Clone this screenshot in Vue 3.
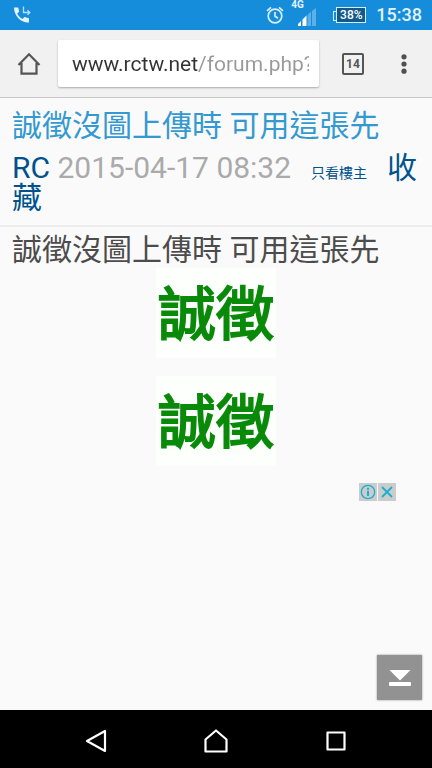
<script setup>
import { ref } from 'vue'

const url = ref('www.rctw.net/forum.php?mod=viewthread')
const tabCount = ref(14)
const post = {
  title: '誠徵沒圖上傳時 可用這張先',
  author: 'RC',
  date: '2015-04-17 08:32',
}
const banners = ['誠徵', '誠徵']
</script>

<template>
  <div class="screen">
    <div class="status">
      <svg class="call" width="18" height="18" viewBox="0 0 18 18" aria-hidden="true">
        <path d="M1 1.5h4.2l1 4.3-2 1.8c1.2 2.6 3 4.3 5.4 5.5l1.8-2 4.6 1.1V16.500C8 17 1 10 1 1.500z" fill="#e3f3ff" />
        <path d="M10.500 0.500V6.500H16.500M14.500 4.300l2.300 2.200-2.300 2.200" fill="none" stroke="#b9dff8" stroke-width="1.300" />
      </svg>
      <div class="status-right">
        <svg width="18" height="20" viewBox="0 0 18 20" fill="none" stroke="#d9eefb" stroke-width="1.700" aria-hidden="true">
          <circle cx="9" cy="11" r="6.800" />
          <path d="M9 7v4.300l3 2M1 5.800L5 2.400M17 5.800L13 2.400" />
        </svg>
        <div class="network">
          <span class="generation">4G</span>
          <svg width="18" height="18" viewBox="0 0 18 18" aria-hidden="true">
            <path d="M0 18v-2l3-3v5z" fill="#fff" />
            <path d="M4.500 18v-6.500l4-4V18z" fill="#fff" />
            <path d="M9.500 18V7l3.500-3.500v14.500z" fill="#5cb0e8" />
            <path d="M14 18V3l4-3v18z" fill="#5cb0e8" />
          </svg>
        </div>
        <span class="battery">38%</span>
        <time class="clock">15:38</time>
      </div>
    </div>

    <header class="toolbar">
      <button class="tool" type="button" aria-label="Home">
        <svg width="24" height="24" viewBox="0 0 24 24" fill="none" stroke="#555" stroke-width="2.200">
          <path d="M1.500 13L12 2.300 22.500 13M4.500 11v10.700h15V11" />
        </svg>
      </button>
      <div class="address">
        <input v-model="url" class="address-input" type="text" aria-label="Address" />
      </div>
      <button class="tool tabs" type="button" aria-label="Open tabs">
        <span class="tab-count">{{ tabCount }}</span>
      </button>
      <button class="tool menu" type="button" aria-label="Menu">
        <svg width="6" height="20" viewBox="0 0 6 20" fill="#505050">
          <circle cx="3" cy="2.800" r="2.600" />
          <circle cx="3" cy="10" r="2.600" />
          <circle cx="3" cy="17.200" r="2.600" />
        </svg>
      </button>
    </header>

    <main class="page">
      <section class="heading">
        <h1 class="title">{{ post.title }}</h1>
        <p class="meta">
          <a href="#author">{{ post.author }}</a>
          {{ ' ' }}<time>{{ post.date }}</time>
          <a class="only" href="#only">只看樓主</a>
          <a href="#favorite">收藏</a>
        </p>
      </section>

      <article class="body">
        <p class="message">{{ post.title }}</p>
        <div class="banners">
          <span v-for="(text, i) in banners" :key="i" class="banner">{{ text }}</span>
        </div>
        <div class="ad">
          <button class="ad-button" type="button" aria-label="Ad information">
            <svg width="18" height="18" viewBox="0 0 18 18" fill="none" stroke="#18afd0">
              <circle cx="9" cy="9" r="6.700" stroke-width="1.300" />
              <path d="M9 7.800v5.200M9 4.800v2" stroke-width="2" />
            </svg>
          </button>
          <button class="ad-button" type="button" aria-label="Close ad">
            <svg width="18" height="18" viewBox="0 0 18 18" fill="none" stroke="#18afd0" stroke-width="1.800">
              <path d="M4 4l10 10M14 4L4 14" />
            </svg>
          </button>
        </div>
      </article>

      <button class="bottom" type="button" aria-label="Scroll to bottom">
        <svg width="22" height="16" viewBox="0 0 22 16" fill="#fff">
          <path d="M0.500 0h21L11 10.500z" />
          <rect x="0" y="12" width="22" height="4" rx="1" />
        </svg>
      </button>
    </main>

    <nav class="system">
      <button class="key" type="button" aria-label="Back">
        <svg width="24" height="24" viewBox="0 0 24 24" fill="none" stroke="#fff" stroke-width="2.200" stroke-linejoin="round">
          <path d="M21 2v20L3 12z" />
        </svg>
      </button>
      <button class="key" type="button" aria-label="Home screen">
        <svg width="24" height="24" viewBox="0 0 24 24" fill="none" stroke="#fff" stroke-width="2.200" stroke-linejoin="round">
          <path d="M1.500 10.500L12 1.500l10.500 9v12h-21z" />
        </svg>
      </button>
      <button class="key" type="button" aria-label="Recent apps">
        <svg width="24" height="24" viewBox="0 0 24 24" fill="none" stroke="#fff" stroke-width="2.200" stroke-linejoin="round">
          <path d="M3.500 3.500h17v17h-17z" />
        </svg>
      </button>
    </nav>
  </div>
</template>

<style>
body {
  background: #fafafa;
}
</style>

<style scoped>
.screen {
  min-height: 100vh;
  display: flex;
  flex-direction: column;
  font-family: Roboto, "Noto Sans CJK TC", sans-serif;
  background: #fafafa;
}
button {
  padding: 0;
  border: 0;
  background: none;
  font: inherit;
}
svg {
  display: block;
  overflow: visible;
}
a {
  color: #00528c;
  text-decoration: none;
}
.status {
  display: flex;
  align-items: center;
  justify-content: space-between;
  height: 30px;
  padding: 0 10px 0 13px;
  background: #168ddb;
  color: #e3f3fd;
}
.status-right {
  display: flex;
  align-items: center;
}
.network {
  position: relative;
  margin: 0 20px 0 14px;
  padding-top: 4px;
}
.generation {
  position: absolute;
  left: -7px;
  top: -5px;
  font-size: 10px;
  line-height: 12px;
  font-weight: 700;
}
.battery {
  position: relative;
  width: 28px;
  border: 1px solid #d9eefb;
  background: #14598c;
  color: #fff;
  font-size: 12px;
  line-height: 14px;
  font-weight: 500;
  text-align: center;
}
.battery::before {
  content: "";
  position: absolute;
  left: -4px;
  top: 3px;
  width: 2px;
  height: 8px;
  border: 1px solid #d9eefb;
  border-right: 0;
}
.clock {
  margin-left: 10px;
  font-size: 18px;
  line-height: 30px;
  font-weight: 500;
}
.toolbar {
  display: flex;
  align-items: center;
  height: 68px;
  background: #f1f1f1;
  border-bottom: 1px solid #c8c8c8;
  box-sizing: border-box;
}
.tool {
  display: flex;
  align-items: center;
  justify-content: center;
  width: 58px;
  height: 48px;
}
.address {
  flex: 1;
  min-width: 0;
  padding: 0 10px 0 14px;
  background: #fff;
  border-radius: 2px;
  box-shadow: 0 1px 2px rgba(0, 0, 0, 0.3);
}
.address-input {
  display: block;
  width: 100%;
  height: 47px;
  padding: 0;
  border: 0;
  outline: 0;
  font-family: Roboto, sans-serif;
  font-size: 21px;
  color: transparent;
  background: linear-gradient(90deg, #333 126px, #999 126px);
  -webkit-background-clip: text;
  background-clip: text;
}
.tabs {
  width: 68px;
}
.tab-count {
  width: 18px;
  border: 2px solid #555;
  border-radius: 2px;
  color: #555;
  font-size: 12px;
  line-height: 18px;
  font-weight: 700;
  text-align: center;
}
.menu {
  width: 34px;
  margin-right: 11px;
}
.page {
  position: relative;
  flex: 1;
}
.heading {
  padding: 10px 12px 12px;
  border-bottom: 2px solid #ececec;
}
.title,
.message {
  margin: 0;
  font-size: 30px;
  line-height: 36px;
  font-weight: 400;
}
.title {
  color: #3399d0;
}
.meta {
  margin: 9px 0 0;
  font-size: 30px;
  line-height: 30px;
  color: #aaa;
}
.only {
  margin: 0 20px;
  font-size: 14px;
  line-height: 14px;
}
.body {
  padding: 5px 12px 0;
  color: #4c4c4c;
}
.banners {
  display: flex;
  flex-direction: column;
  align-items: center;
  gap: 18px;
}
.banner {
  padding: 4px 2px 0;
  background: #fdfffd;
  color: #098a09;
  font-size: 58px;
  line-height: 86px;
  -webkit-text-stroke: 2px #098a09;
}
.ad {
  display: flex;
  justify-content: flex-end;
  gap: 1px;
  margin: 17px 24px 0;
}
.ad-button {
  background: #ccc;
}
.bottom {
  position: absolute;
  right: 10px;
  bottom: 10px;
  display: flex;
  align-items: center;
  justify-content: center;
  width: 45px;
  height: 45px;
  background: #929292;
  box-shadow: 0 0 2px rgba(0, 0, 0, 0.4);
}
.system {
  display: flex;
  align-items: center;
  justify-content: center;
  gap: 96px;
  height: 54px;
  padding-top: 4px;
  background: #000;
}
</style>
